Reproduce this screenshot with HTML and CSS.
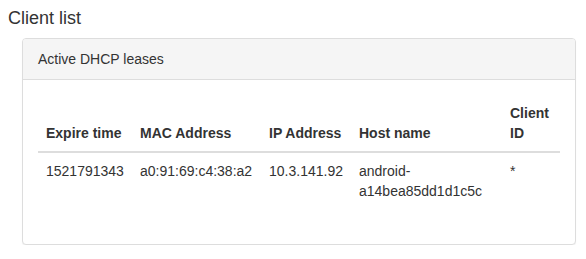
FILE: index.html
```html
<!DOCTYPE html>
<html>
<head>
<meta charset="utf-8">
<link rel="stylesheet" href="styles.css">
</head>
<body>
<h2 class="page-title">Client list</h2>
<div class="panel">
  <div class="panel-heading">Active DHCP leases</div>
  <div class="panel-body">
    <table class="table">
      <colgroup>
        <col class="c-expire">
        <col class="c-mac">
        <col class="c-ip">
        <col class="c-host">
        <col class="c-client">
      </colgroup>
      <thead>
        <tr>
          <th>Expire time</th>
          <th>MAC Address</th>
          <th>IP Address</th>
          <th>Host name</th>
          <th>Client ID</th>
        </tr>
      </thead>
      <tbody>
        <tr>
          <td>1521791343</td>
          <td>a0:91:69:c4:38:a2</td>
          <td>10.3.141.92</td>
          <td>android-a14bea85dd1d1c5c</td>
          <td>*</td>
        </tr>
      </tbody>
    </table>
  </div>
</div>
</body>
</html>
```

FILE: styles.css
```css
* { box-sizing: border-box; }
html, body { margin: 0; padding: 0; background: #fff; }
body {
  font-family: "Liberation Sans", Arial, sans-serif;
  font-size: 14px;
  line-height: 20px;
  color: #333;
  padding: 8px 11px 0 8px;
}
.page-title {
  margin: 0 0 10px 0;
  font-size: 18px;
  line-height: 20px;
  font-weight: normal;
  color: #333;
}
.panel {
  margin-left: 14px;
  width: 554px;
  border: 1px solid #ddd;
  border-radius: 4px;
  background: #fff;
  box-shadow: 0 1px 1px rgba(0,0,0,0.05);
}
.panel-heading {
  padding: 10px 15px;
  background: #f5f5f5;
  border-bottom: 1px solid #ddd;
  border-radius: 3px 3px 0 0;
  color: #333;
}
.panel-body {
  padding: 15px;
}
.table {
  width: 100%;
  table-layout: fixed;
  border-collapse: collapse;
  border-spacing: 0;
  margin-bottom: 20px;
}
.c-expire { width: 94px; }
.c-mac { width: 129px; }
.c-ip { width: 90px; }
.c-host { width: 151px; }
.c-client { width: 58px; }
.table th, .table td {
  padding: 8px;
  text-align: left;
}
.table th {
  vertical-align: bottom;
  font-weight: bold;
  border-bottom: 2px solid #ddd;
}
.table td {
  vertical-align: top;
  border-top: 1px solid #ddd;
}
```
